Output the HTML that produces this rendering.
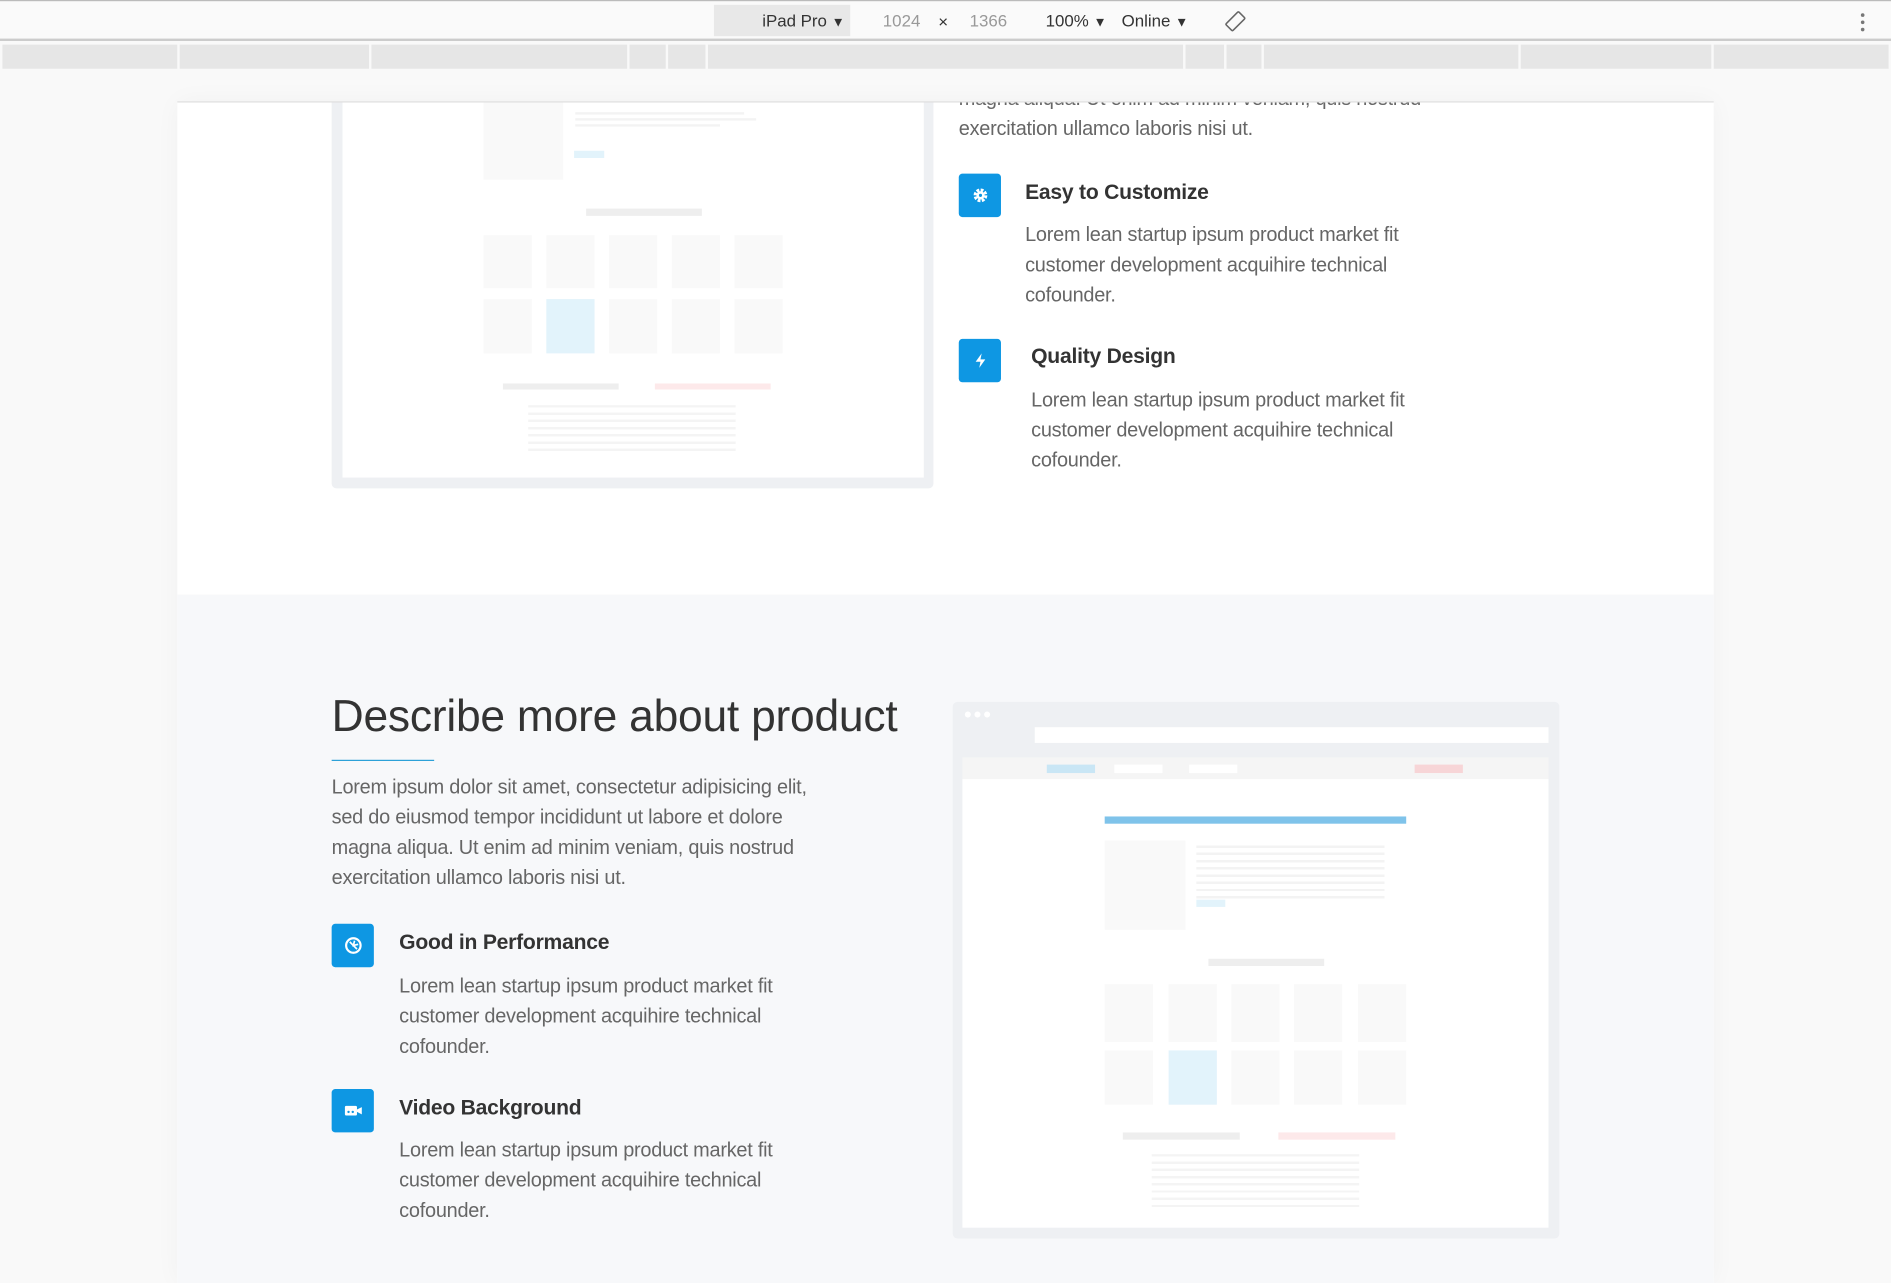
<!DOCTYPE html>
<html><head><meta charset="utf-8"><style>
*{margin:0;padding:0;box-sizing:border-box}
html,body{width:1891px;height:1273px;overflow:hidden;background:#f9f9f9;font-family:"Liberation Sans",sans-serif}
#s{position:absolute;left:0;top:0;width:1568px;height:1056px;transform:scale(1.206);transform-origin:0 0;background:#f9f9f9}
.a{position:absolute}
.tb{left:0;top:0;width:1568px;height:34px;background:#fafafa;border-top:1px solid #bbb;border-bottom:2px solid #ccc}
.t{font-size:14px;color:#333;top:9px;white-space:nowrap}
.g{color:#999}
.seg{top:37px;height:20px;background:#e6e6e6}
#page{left:147px;top:84px;width:1274px;height:980px;overflow:hidden;background:#fff;border-top:1px solid #ddd;box-shadow:0 0 20px rgba(0,0,0,.04)}
#in{position:absolute;left:-147px;top:-84px;width:1568px;height:1100px}
.p{font-size:16.5px;color:#666;line-height:25px;white-space:nowrap;letter-spacing:-.2px}
.h{font-size:17.5px;font-weight:bold;color:#333;white-space:nowrap;letter-spacing:-.2px}
.ic{width:35px;height:36px;background:#0e97e3;border-radius:3px;display:flex;align-items:center;justify-content:center}
.b{background:#f9f9f9}
</style></head><body><div id="s">
<div class="a tb"></div>
<div class="a" style="left:592px;top:4px;width:113px;height:26px;background:#e8e8e8"></div>
<div class="a t" style="left:632px">iPad Pro <span style="font-size:11px">▼</span></div>
<div class="a t g" style="left:732px">1024</div>
<div class="a t" style="left:778px;top:10px">×</div>
<div class="a t g" style="left:804px">1366</div>
<div class="a t" style="left:867px">100% <span style="font-size:11px">▼</span></div>
<div class="a t" style="left:930px">Online <span style="font-size:11px">▼</span></div>
<svg class="a" style="left:1014px;top:8px" width="20" height="20" viewBox="0 0 20 20"><rect x="6" y="2" width="8" height="15" rx="1" transform="rotate(45 10 10)" fill="none" stroke="#666" stroke-width="1.3"/></svg>
<div class="a" style="left:1543px;top:11px;width:4px;height:16px;font-size:0">
<div style="width:3px;height:3px;background:#777;border-radius:50%;margin-bottom:3px"></div><div style="width:3px;height:3px;background:#777;border-radius:50%;margin-bottom:3px"></div><div style="width:3px;height:3px;background:#777;border-radius:50%"></div></div>
<div class="a seg" style="left:2px;width:145px"></div>
<div class="a seg" style="left:149px;width:157px"></div>
<div class="a seg" style="left:308px;width:212px"></div>
<div class="a seg" style="left:522px;width:30px"></div>
<div class="a seg" style="left:554px;width:31px"></div>
<div class="a seg" style="left:587px;width:394px"></div>
<div class="a seg" style="left:983px;width:32px"></div>
<div class="a seg" style="left:1017px;width:29px"></div>
<div class="a seg" style="left:1048px;width:211px"></div>
<div class="a seg" style="left:1261px;width:158px"></div>
<div class="a seg" style="left:1421px;width:145px"></div>

<div class="a" id="page"><div id="in">
<div class="a" style="left:275px;top:60px;width:499px;height:344px;background:#eef0f3;border-radius:4px"></div>
<div class="a" style="left:284px;top:60px;width:482px;height:335px;background:#fff"></div>
<div class="a b" style="left:401px;top:84px;width:66px;height:64px"></div>
<div class="a" style="left:477px;top:92px;width:140px;height:2px;background:#f3f3f3"></div>
<div class="a" style="left:477px;top:97px;width:150px;height:2px;background:#f3f3f3"></div>
<div class="a" style="left:477px;top:102px;width:120px;height:2px;background:#f3f3f3"></div>
<div class="a" style="left:476px;top:124px;width:25px;height:6px;background:#e2f3fb"></div>
<div class="a" style="left:486px;top:172px;width:96px;height:6px;background:#eee"></div>
<div class="a b" style="left:401px;top:194px;width:40px;height:44px"></div>
<div class="a b" style="left:453px;top:194px;width:40px;height:44px"></div>
<div class="a b" style="left:505px;top:194px;width:40px;height:44px"></div>
<div class="a b" style="left:557px;top:194px;width:40px;height:44px"></div>
<div class="a b" style="left:609px;top:194px;width:40px;height:44px"></div>
<div class="a b" style="left:401px;top:247px;width:40px;height:45px"></div>
<div class="a" style="left:453px;top:247px;width:40px;height:45px;background:#e2f3fb"></div>
<div class="a b" style="left:505px;top:247px;width:40px;height:45px"></div>
<div class="a b" style="left:557px;top:247px;width:40px;height:45px"></div>
<div class="a b" style="left:609px;top:247px;width:40px;height:45px"></div>
<div class="a" style="left:417px;top:317px;width:96px;height:5px;background:#eee"></div>
<div class="a" style="left:543px;top:317px;width:96px;height:5px;background:#fde9ea"></div>
<div class="a" style="left:438px;top:335px;width:172px;height:40px;background:repeating-linear-gradient(#f4f4f4 0 2px,transparent 2px 6px)"></div>

<div class="a p" style="left:795px;top:69px">magna aliqua. Ut enim ad minim veniam, quis nostrud</div>
<div class="a p" style="left:795px;top:94px">exercitation ullamco laboris nisi ut.</div>
<div class="a ic" style="left:795px;top:143px"><svg width="14" height="14" viewBox="0 0 14 14"><circle cx="7" cy="7" r="4.2" fill="none" stroke="#fff" stroke-width="3" stroke-dasharray="2.2 1.1"/><circle cx="7" cy="7" r="3.4" fill="#fff"/><circle cx="7" cy="7" r="1.3" fill="#0e97e3"/></svg></div>
<div class="a h" style="left:850px;top:148px">Easy to Customize</div>
<div class="a p" style="left:850px;top:182px">Lorem lean startup ipsum product market fit<br>customer development acquihire technical<br>cofounder.</div>
<div class="a ic" style="left:795px;top:280px"><svg width="12" height="14" viewBox="0 0 12 14"><path d="M7 1 L2 8 H6 L5 13 L10 6 H6 Z" fill="#fff"/></svg></div>
<div class="a h" style="left:855px;top:284px">Quality Design</div>
<div class="a p" style="left:855px;top:319px">Lorem lean startup ipsum product market fit<br>customer development acquihire technical<br>cofounder.</div>

<div class="a" style="left:147px;top:492px;width:1274px;height:600px;background:#f7f8fa"></div>
<div class="a" style="left:275px;top:572px;font-size:36.8px;color:#333;white-space:nowrap;letter-spacing:-.2px">Describe more about product</div>
<div class="a" style="left:275px;top:629px;width:85px;height:1px;background:#2aa0d8"></div>
<div class="a p" style="left:275px;top:640px">Lorem ipsum dolor sit amet, consectetur adipisicing elit,<br>sed do eiusmod tempor incididunt ut labore et dolore<br>magna aliqua. Ut enim ad minim veniam, quis nostrud<br>exercitation ullamco laboris nisi ut.</div>
<div class="a ic" style="left:275px;top:765px"><svg width="16" height="16" viewBox="0 0 16 16"><circle cx="8" cy="8" r="6" fill="none" stroke="#fff" stroke-width="1.8"/><path d="M5 5 L11 11 M9 4 L8 8 L12 7" stroke="#fff" stroke-width="1.4" fill="none"/></svg></div>
<div class="a h" style="left:331px;top:770px">Good in Performance</div>
<div class="a p" style="left:331px;top:805px">Lorem lean startup ipsum product market fit<br>customer development acquihire technical<br>cofounder.</div>
<div class="a ic" style="left:275px;top:902px"><svg width="16" height="12" viewBox="0 0 16 12"><rect x="1" y="2" width="10" height="8" rx="1" fill="#fff"/><path d="M11 5 L15 3 V9 L11 7 Z" fill="#fff"/><circle cx="4" cy="7" r="1" fill="#0e97e3"/><circle cx="7.5" cy="7" r="1" fill="#0e97e3"/></svg></div>
<div class="a h" style="left:331px;top:907px">Video Background</div>
<div class="a p" style="left:331px;top:941px">Lorem lean startup ipsum product market fit<br>customer development acquihire technical<br>cofounder.</div>

<div class="a" style="left:790px;top:581px;width:503px;height:445px;background:#eef0f3;border-radius:4px"></div>
<div class="a" style="left:800px;top:589px;width:5px;height:5px;background:#fff;border-radius:50%"></div>
<div class="a" style="left:808px;top:589px;width:5px;height:5px;background:#fff;border-radius:50%"></div>
<div class="a" style="left:816px;top:589px;width:5px;height:5px;background:#fff;border-radius:50%"></div>
<div class="a" style="left:858px;top:602px;width:426px;height:13px;background:#fff"></div>
<div class="a" style="left:798px;top:627px;width:486px;height:18px;background:#f5f5f5"></div>
<div class="a" style="left:868px;top:633px;width:40px;height:7px;background:#c9e6f5"></div>
<div class="a" style="left:924px;top:633px;width:40px;height:7px;background:#fff"></div>
<div class="a" style="left:986px;top:633px;width:40px;height:7px;background:#fff"></div>
<div class="a" style="left:1173px;top:633px;width:40px;height:7px;background:#f7d5d7"></div>
<div class="a" style="left:798px;top:645px;width:486px;height:372px;background:#fff"></div>
<div class="a" style="left:916px;top:676px;width:250px;height:6px;background:#7fc3ea"></div>
<div class="a b" style="left:916px;top:696px;width:67px;height:74px"></div>
<div class="a" style="left:992px;top:700px;width:156px;height:48px;background:repeating-linear-gradient(#f3f3f3 0 2px,transparent 2px 6px)"></div>
<div class="a" style="left:992px;top:745px;width:24px;height:6px;background:#e2f3fb"></div>
<div class="a" style="left:1002px;top:794px;width:96px;height:6px;background:#eee"></div>
<div class="a b" style="left:916px;top:815px;width:40px;height:48px"></div>
<div class="a b" style="left:969px;top:815px;width:40px;height:48px"></div>
<div class="a b" style="left:1021px;top:815px;width:40px;height:48px"></div>
<div class="a b" style="left:1073px;top:815px;width:40px;height:48px"></div>
<div class="a b" style="left:1126px;top:815px;width:40px;height:48px"></div>
<div class="a b" style="left:916px;top:870px;width:40px;height:45px"></div>
<div class="a" style="left:969px;top:870px;width:40px;height:45px;background:#e2f3fb"></div>
<div class="a b" style="left:1021px;top:870px;width:40px;height:45px"></div>
<div class="a b" style="left:1073px;top:870px;width:40px;height:45px"></div>
<div class="a b" style="left:1126px;top:870px;width:40px;height:45px"></div>
<div class="a" style="left:931px;top:938px;width:97px;height:6px;background:#eee"></div>
<div class="a" style="left:1060px;top:938px;width:97px;height:6px;background:#fde9ea"></div>
<div class="a" style="left:955px;top:956px;width:172px;height:44px;background:repeating-linear-gradient(#f4f4f4 0 2px,transparent 2px 6px)"></div>
</div></div>
</div></body></html>
